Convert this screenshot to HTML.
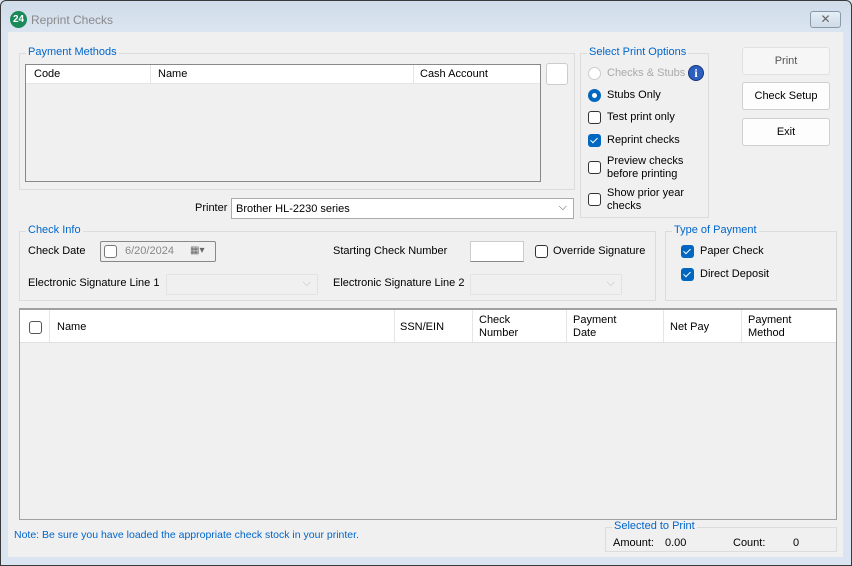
<!DOCTYPE html>
<html><head><style>
*{box-sizing:border-box;margin:0;padding:0}
body{width:852px;height:566px;background:#dbe5f1;font-family:"Liberation Sans",sans-serif;font-size:11px;color:#000;position:relative;overflow:hidden}
.a{position:absolute;white-space:nowrap}
.win{position:absolute;left:0;top:0;width:852px;height:566px;border:1px solid #3a3a3a;border-radius:6px 6px 0 0;background:linear-gradient(#cfdbe8,#dbe5f1 30px)}
.content{position:absolute;left:8px;top:32px;width:835px;height:525px;background:#f0f0f0}
.gb{position:absolute;border:1px solid #dcdcdc}
.lg{position:absolute;color:#0066cc;background:#f0f0f0;padding:0 2px;top:-8px;left:6px;font-size:11px}
.btn{position:absolute;background:#fdfdfd;border:1px solid #cfcfcf;border-radius:3px;text-align:center;line-height:26px}
.cb{position:absolute;width:13px;height:13px;border:1px solid #333;border-radius:3px;background:#fff}
.cbk{position:absolute;width:13px;height:13px;border-radius:3px;background:#0067c0}
.cbk:after{content:"";position:absolute;left:4px;top:2px;width:3px;height:6px;border:solid #fff;border-width:0 1px 1px 0;transform:rotate(45deg)}
.hd{position:absolute;top:0;height:100%;border-left:1px solid #e5e5e5}
</style></head><body>
<div class="win"></div>
<div class="a" style="left:10px;top:11px;width:17px;height:17px;border-radius:50%;background:#1a8a5a;color:#fff;font-size:10px;font-weight:bold;text-align:center;line-height:17px">24</div>
<div class="a" style="left:31px;top:13px;color:#8a8a8a;font-size:12px">Reprint Checks</div>
<div class="a" style="left:810px;top:11px;width:31px;height:17px;border:1px solid #8899aa;border-radius:3px;background:linear-gradient(#e6eef6,#cfdbe8);text-align:center;line-height:15px;color:#666;font-size:12px">✕</div>
<div class="content"></div>

<div class="gb" style="left:19px;top:53px;width:556px;height:137px"><span class="lg">Payment Methods</span></div>
<div class="a" style="left:25px;top:64px;width:516px;height:118px;border:1px solid #888;background:#f0f0f0">
 <div class="a" style="left:0;top:0;width:514px;height:19px;background:#fff;border-bottom:1px solid #e5e5e5">
  <span class="a" style="left:8px;top:3px">Code</span>
  <div class="hd" style="left:124px"></div><span class="a" style="left:132px;top:3px">Name</span>
  <div class="hd" style="left:387px"></div><span class="a" style="left:394px;top:3px">Cash Account</span>
 </div>
</div>
<div class="a" style="left:546px;top:63px;width:22px;height:22px;border:1px solid #ccc;border-radius:3px;background:#fff"></div>
<div class="a" style="left:195px;top:202px">Printer</div>
<div class="a" style="left:231px;top:198px;width:343px;height:21px;border:1px solid #aaa;background:#fff;padding:4px 4px">Brother HL-2230 series<span style="position:absolute;right:6px;top:2px;color:#555">⌵</span></div>

<div class="gb" style="left:580px;top:53px;width:129px;height:165px"><span class="lg">Select Print Options</span></div>
<div class="a" style="left:588px;top:67px;width:13px;height:13px;border:1px solid #ccc;border-radius:50%;background:#fff"></div>
<div class="a" style="left:607px;top:67px;color:#aaa">Checks &amp; Stubs</div>
<div class="a" style="left:688px;top:65px;width:16px;height:16px;border-radius:50%;background:#2c5fbf;border:1px solid #14357a;color:#fff;font-weight:bold;font-family:'Liberation Serif',serif;text-align:center;line-height:15px;font-size:12px">i</div>
<div class="a" style="left:588px;top:89px;width:13px;height:13px;border-radius:50%;background:#0067c0"><div style="position:absolute;left:4px;top:4px;width:5px;height:5px;border-radius:50%;background:#fff"></div></div>
<div class="a" style="left:607px;top:89px">Stubs Only</div>
<div class="cb" style="left:588px;top:111px"></div><div class="a" style="left:607px;top:111px">Test print only</div>
<div class="cbk" style="left:588px;top:134px"></div><div class="a" style="left:607px;top:134px">Reprint checks</div>
<div class="cb" style="left:588px;top:161px"></div><div class="a" style="left:607px;top:155px;line-height:13px">Preview checks<br>before printing</div>
<div class="cb" style="left:588px;top:193px"></div><div class="a" style="left:607px;top:187px;line-height:13px">Show prior year<br>checks</div>

<div class="btn" style="left:742px;top:47px;width:88px;height:28px;background:#f6f6f6;border-color:#e0e0e0;color:#555">Print</div>
<div class="btn" style="left:742px;top:82px;width:88px;height:28px">Check Setup</div>
<div class="btn" style="left:742px;top:118px;width:88px;height:28px">Exit</div>

<div class="gb" style="left:19px;top:231px;width:637px;height:70px"><span class="lg">Check Info</span></div>
<div class="a" style="left:28px;top:245px">Check Date</div>
<div class="a" style="left:100px;top:241px;width:116px;height:21px;border:1px solid #888;border-radius:2px;background:#f0f0f0"></div>
<div class="cb" style="left:104px;top:245px;border-color:#777"></div>
<div class="a" style="left:125px;top:245px;color:#888">6/20/2024</div>
<div class="a" style="left:190px;top:245px;color:#666;font-size:10px">▦▾</div>
<div class="a" style="left:333px;top:245px">Starting Check Number</div>
<div class="a" style="left:470px;top:241px;width:54px;height:21px;border:1px solid #ccc;border-bottom-color:#888;background:#fff"></div>
<div class="cb" style="left:535px;top:245px"></div><div class="a" style="left:553px;top:245px">Override Signature</div>
<div class="a" style="left:28px;top:277px">Electronic Signature Line 1</div>
<div class="a" style="left:166px;top:274px;width:152px;height:21px;border:1px solid #e3e3e3;background:#f0f0f0"><span class="a" style="right:6px;top:2px;color:#bbb">⌵</span></div>
<div class="a" style="left:333px;top:277px">Electronic Signature Line 2</div>
<div class="a" style="left:470px;top:274px;width:152px;height:21px;border:1px solid #e3e3e3;background:#f0f0f0"><span class="a" style="right:6px;top:2px;color:#bbb">⌵</span></div>

<div class="gb" style="left:665px;top:231px;width:172px;height:70px"><span class="lg">Type of Payment</span></div>
<div class="cbk" style="left:681px;top:245px"></div><div class="a" style="left:700px;top:245px">Paper Check</div>
<div class="cbk" style="left:681px;top:268px"></div><div class="a" style="left:700px;top:268px">Direct Deposit</div>

<div class="a" style="left:19px;top:308px;width:818px;height:212px;border:1px solid #a0a0a0;border-top:2px solid #a0a0a0;background:#f0f0f0">
 <div class="a" style="left:0;top:0;width:816px;height:33px;background:#fff;border-bottom:1px solid #e0e0e0">
  <div class="cb" style="left:9px;top:11px;border-color:#555"></div>
  <div class="hd" style="left:29px"></div><span class="a" style="left:37px;top:11px">Name</span>
  <div class="hd" style="left:374px"></div><span class="a" style="left:380px;top:11px">SSN/EIN</span>
  <div class="hd" style="left:452px"></div><span class="a" style="left:459px;top:4px;line-height:13px">Check<br>Number</span>
  <div class="hd" style="left:546px"></div><span class="a" style="left:553px;top:4px;line-height:13px">Payment<br>Date</span>
  <div class="hd" style="left:643px"></div><span class="a" style="left:650px;top:11px">Net Pay</span>
  <div class="hd" style="left:721px"></div><span class="a" style="left:728px;top:4px;line-height:13px">Payment<br>Method</span>
 </div>
</div>

<div class="a" style="left:14px;top:529px;color:#0066cc;font-size:10.5px">Note: Be sure you have loaded the appropriate check stock in your printer.</div>
<div class="gb" style="left:605px;top:527px;width:232px;height:25px"><span class="lg">Selected to Print</span></div>
<div class="a" style="left:613px;top:537px">Amount:</div>
<div class="a" style="left:665px;top:537px">0.00</div>
<div class="a" style="left:733px;top:537px">Count:</div>
<div class="a" style="left:793px;top:537px">0</div>
</body></html>
